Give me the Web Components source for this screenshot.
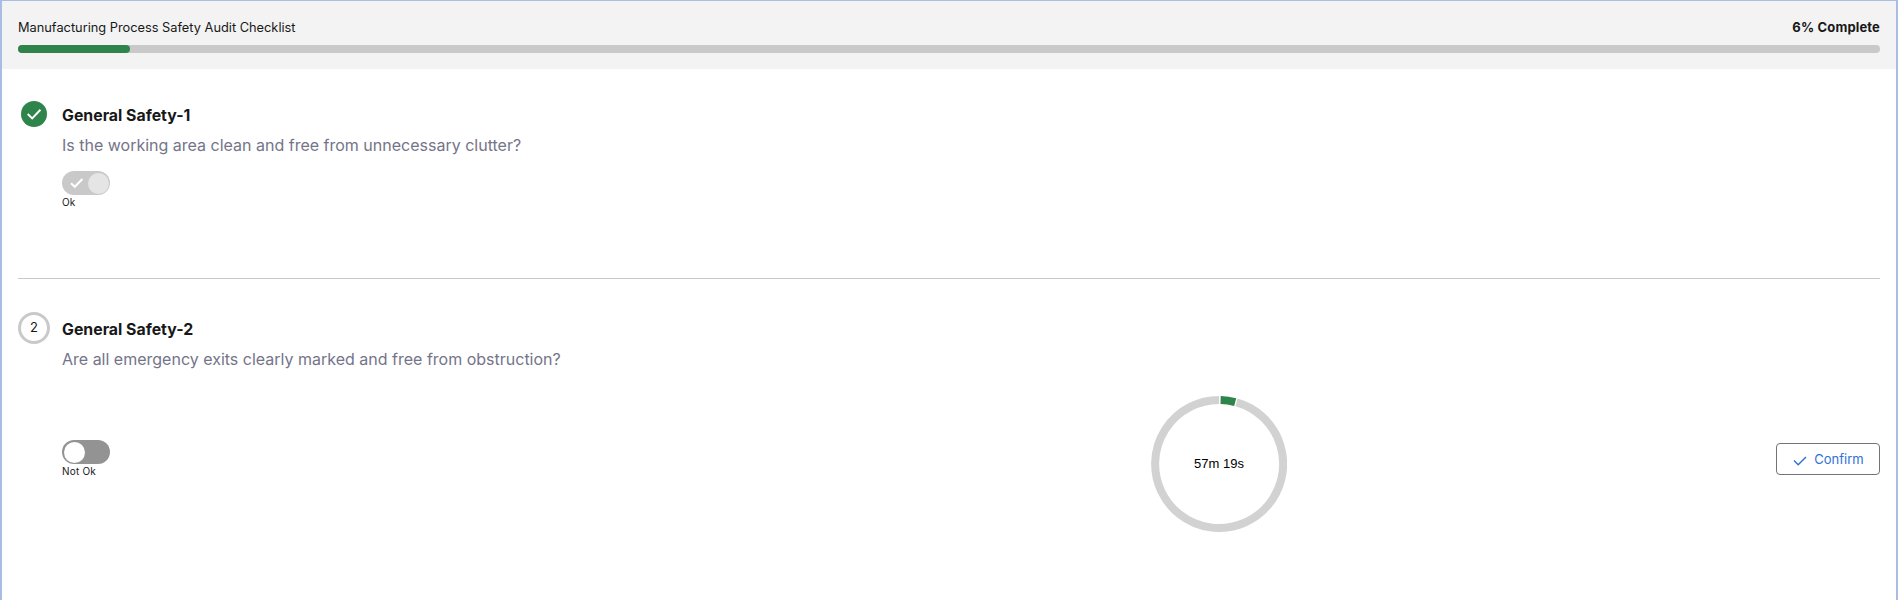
<!DOCTYPE html>
<html>
<head>
<meta charset="utf-8">
<style>
  html, body { margin: 0; height: 100%; background: #fff; }
  body { font-family: Inter, "Liberation Sans", sans-serif; overflow: hidden; }
</style>
</head>
<body>
<audit-page>
  <audit-header title-text="Manufacturing Process Safety Audit Checklist" percent="6"></audit-header>
  <audit-item heading="General Safety-1" question="Is the working area clean and free from unnecessary clutter?" done>
    <audit-toggle label="Ok" checked></audit-toggle>
  </audit-item>
  <audit-item heading="General Safety-2" number="2" question="Are all emergency exits clearly marked and free from obstruction?" active>
    <audit-toggle label="Not Ok"></audit-toggle>
    <audit-timer slot="timer" text="57m 19s"></audit-timer>
    <audit-button slot="action">Confirm</audit-button>
  </audit-item>
</audit-page>
<script>
class AuditPage extends HTMLElement {
  constructor() {
    super();
    this.attachShadow({ mode: 'open' });
    this.shadowRoot.innerHTML = `
      <style>
        :host {
          display: block;
          box-sizing: border-box;
          height: 600px;
          border: 2px solid #a9bde4;
          border-top-width: 1px;
          border-bottom: none;
          overflow: hidden;
        }
      </style>
      <slot></slot>
    `;
  }
}

class AuditHeader extends HTMLElement {
  constructor() {
    super();
    this.attachShadow({ mode: 'open' });
    const title = this.getAttribute('title-text');
    const percent = this.getAttribute('percent');
    this.shadowRoot.innerHTML = `
      <style>
        :host {
          display: block;
          background: #f3f3f3;
          height: 68px;
          padding: 0 16px;
          box-sizing: border-box;
          color: #181818;
        }
        .row {
          display: flex;
          justify-content: space-between;
          align-items: center;
          height: 20px;
          padding-top: 16px;
          font-size: 12.8px;
        }
        b { font-weight: 700; font-size: 13px; letter-spacing: .15px; }
        .track {
          height: 8px;
          margin-top: 8px;
          background: #c9c9c9;
          border-radius: 4px;
        }
        .fill {
          height: 100%;
          width: 112px;
          background: #2e844a;
          border-radius: 4px;
        }
      </style>
      <div class="row"><span>${title}</span><b>${percent}% Complete</b></div>
      <div class="track"><div class="fill"></div></div>
    `;
  }
}

class AuditItem extends HTMLElement {
  constructor() {
    super();
    this.attachShadow({ mode: 'open' });
    const done = this.hasAttribute('done');
    const badge = done
      ? `<svg width="26" height="26" viewBox="0 0 26 26"><circle cx="13" cy="13" r="13" fill="#2e844a"/><path d="M6.7 13l4.5 4.4 8.2-8.6" fill="none" stroke="#fff" stroke-width="2"/></svg>`
      : `<span class="num">${this.getAttribute('number')}</span>`;
    this.shadowRoot.innerHTML = `
      <style>
        :host {
          display: block;
          margin: 0 16px;
          color: #181818;
        }
        :host([done]) {
          height: 209px;
          border-bottom: 1px solid #c9c9c9;
        }
        .head {
          display: flex;
          align-items: center;
          height: 32px;
          padding-top: 29px;
        }
        :host([active]) .head { padding-top: 33px; }
        .badge {
          width: 32px;
          height: 32px;
          margin-right: 12px;
          display: flex;
          align-items: center;
          justify-content: center;
        }
        .num {
          box-sizing: border-box;
          width: 32px;
          height: 32px;
          border: 3px solid #c9c9c9;
          border-radius: 50%;
          display: flex;
          align-items: center;
          justify-content: center;
          font-size: 13px;
          padding-bottom: 2px;
        }
        h3 {
          margin: 0;
          font-size: 15.85px;
          font-weight: 700;
          position: relative;
          top: 1px;
        }
        p {
          margin: 3px 0 0 44px;
          font-size: 16px;
          line-height: 24px;
          color: #747489;
        }
        .body {
          display: grid;
          grid-template-columns: 59.9% 136px 1fr;
          margin-left: 44px;
          margin-top: 14px;
        }
        :host([active]) .body { margin-top: 25px; align-items: start; }
        :host([active]) .left { padding-top: 44px; }
        .right { justify-self: end; padding-top: 47px; }
      </style>
      <div class="head">
        <div class="badge">${badge}</div>
        <h3>${this.getAttribute('heading')}</h3>
      </div>
      <p>${this.getAttribute('question')}</p>
      <div class="body">
        <div class="left"><slot></slot></div>
        <div class="middle"><slot name="timer"></slot></div>
        <div class="right"><slot name="action"></slot></div>
      </div>
    `;
  }
}

class AuditToggle extends HTMLElement {
  constructor() {
    super();
    this.attachShadow({ mode: 'open' });
    const checked = this.hasAttribute('checked');
    this.shadowRoot.innerHTML = `
      <style>
        :host {
          display: block;
          width: 80px;
        }
        .switch {
          box-sizing: border-box;
          width: 48px;
          height: 24px;
          border-radius: 12px;
          display: flex;
          align-items: center;
          padding: 1.5px;
          background: ${checked ? '#c9c9c9' : '#939393'};
          justify-content: ${checked ? 'flex-end' : 'flex-start'};
          position: relative;
        }
        .knob {
          width: 21px;
          height: 21px;
          border-radius: 50%;
          background: ${checked ? '#e5e5e5' : '#fff'};
        }
        svg { position: absolute; left: 8px; top: 6px; }
        .label {
          font-size: 10px;
          line-height: 12px;
          margin-top: 1px;
          letter-spacing: .2px;
          color: #181818;
        }
      </style>
      <div class="switch">
        ${checked ? '<svg width="14" height="12" viewBox="0 0 14 12"><path d="M1 6.2l3.8 3.6L12.4 2" fill="none" stroke="#fff" stroke-width="2"/></svg>' : ''}
        <div class="knob"></div>
      </div>
      <div class="label">${this.getAttribute('label')}</div>
    `;
  }
}

class AuditTimer extends HTMLElement {
  constructor() {
    super();
    this.attachShadow({ mode: 'open' });
    this.shadowRoot.innerHTML = `
      <style>
        :host {
          display: block;
          width: 136px;
          height: 136px;
          position: relative;
        }
        svg { display: block; }
        span {
          position: absolute;
          inset: 0;
          padding-bottom: 2px;
          display: flex;
          align-items: center;
          justify-content: center;
          font: 13px "Liberation Sans", Arial, sans-serif;
          color: #000;
        }
      </style>
      <svg width="136" height="136" viewBox="0 0 136 136">
        <path d="M68 4 A64 64 0 1 0 85.5 6.4" fill="none" stroke="#d2d2d2" stroke-width="8"/>
        <path d="M69.6 4 A64 64 0 0 1 84.2 6.1" fill="none" stroke="#2e844a" stroke-width="8"/>
      </svg>
      <span>${this.getAttribute('text')}</span>
    `;
  }
}

class AuditButton extends HTMLElement {
  constructor() {
    super();
    this.attachShadow({ mode: 'open' });
    this.shadowRoot.innerHTML = `
      <style>
        :host { display: block; }
        button {
          box-sizing: border-box;
          width: 104px;
          height: 32px;
          background: #fff;
          border: 1px solid #747474;
          border-radius: 4px;
          color: #2f6fd8;
          font: 13px Inter, "Liberation Sans", sans-serif;
          display: flex;
          align-items: center;
          justify-content: center;
          gap: 8px;
          padding: 0;
        }
        svg { position: relative; top: 2px; left: 1px; }
      </style>
      <button>
        <svg width="14" height="12" viewBox="0 0 14 12"><path d="M1 5.5l4.2 4.2L13 2" fill="none" stroke="#2f6fd8" stroke-width="1.4"/></svg>
        <slot></slot>
      </button>
    `;
  }
}

customElements.define('audit-page', AuditPage);
customElements.define('audit-header', AuditHeader);
customElements.define('audit-item', AuditItem);
customElements.define('audit-toggle', AuditToggle);
customElements.define('audit-timer', AuditTimer);
customElements.define('audit-button', AuditButton);
</script>
</body>
</html>
